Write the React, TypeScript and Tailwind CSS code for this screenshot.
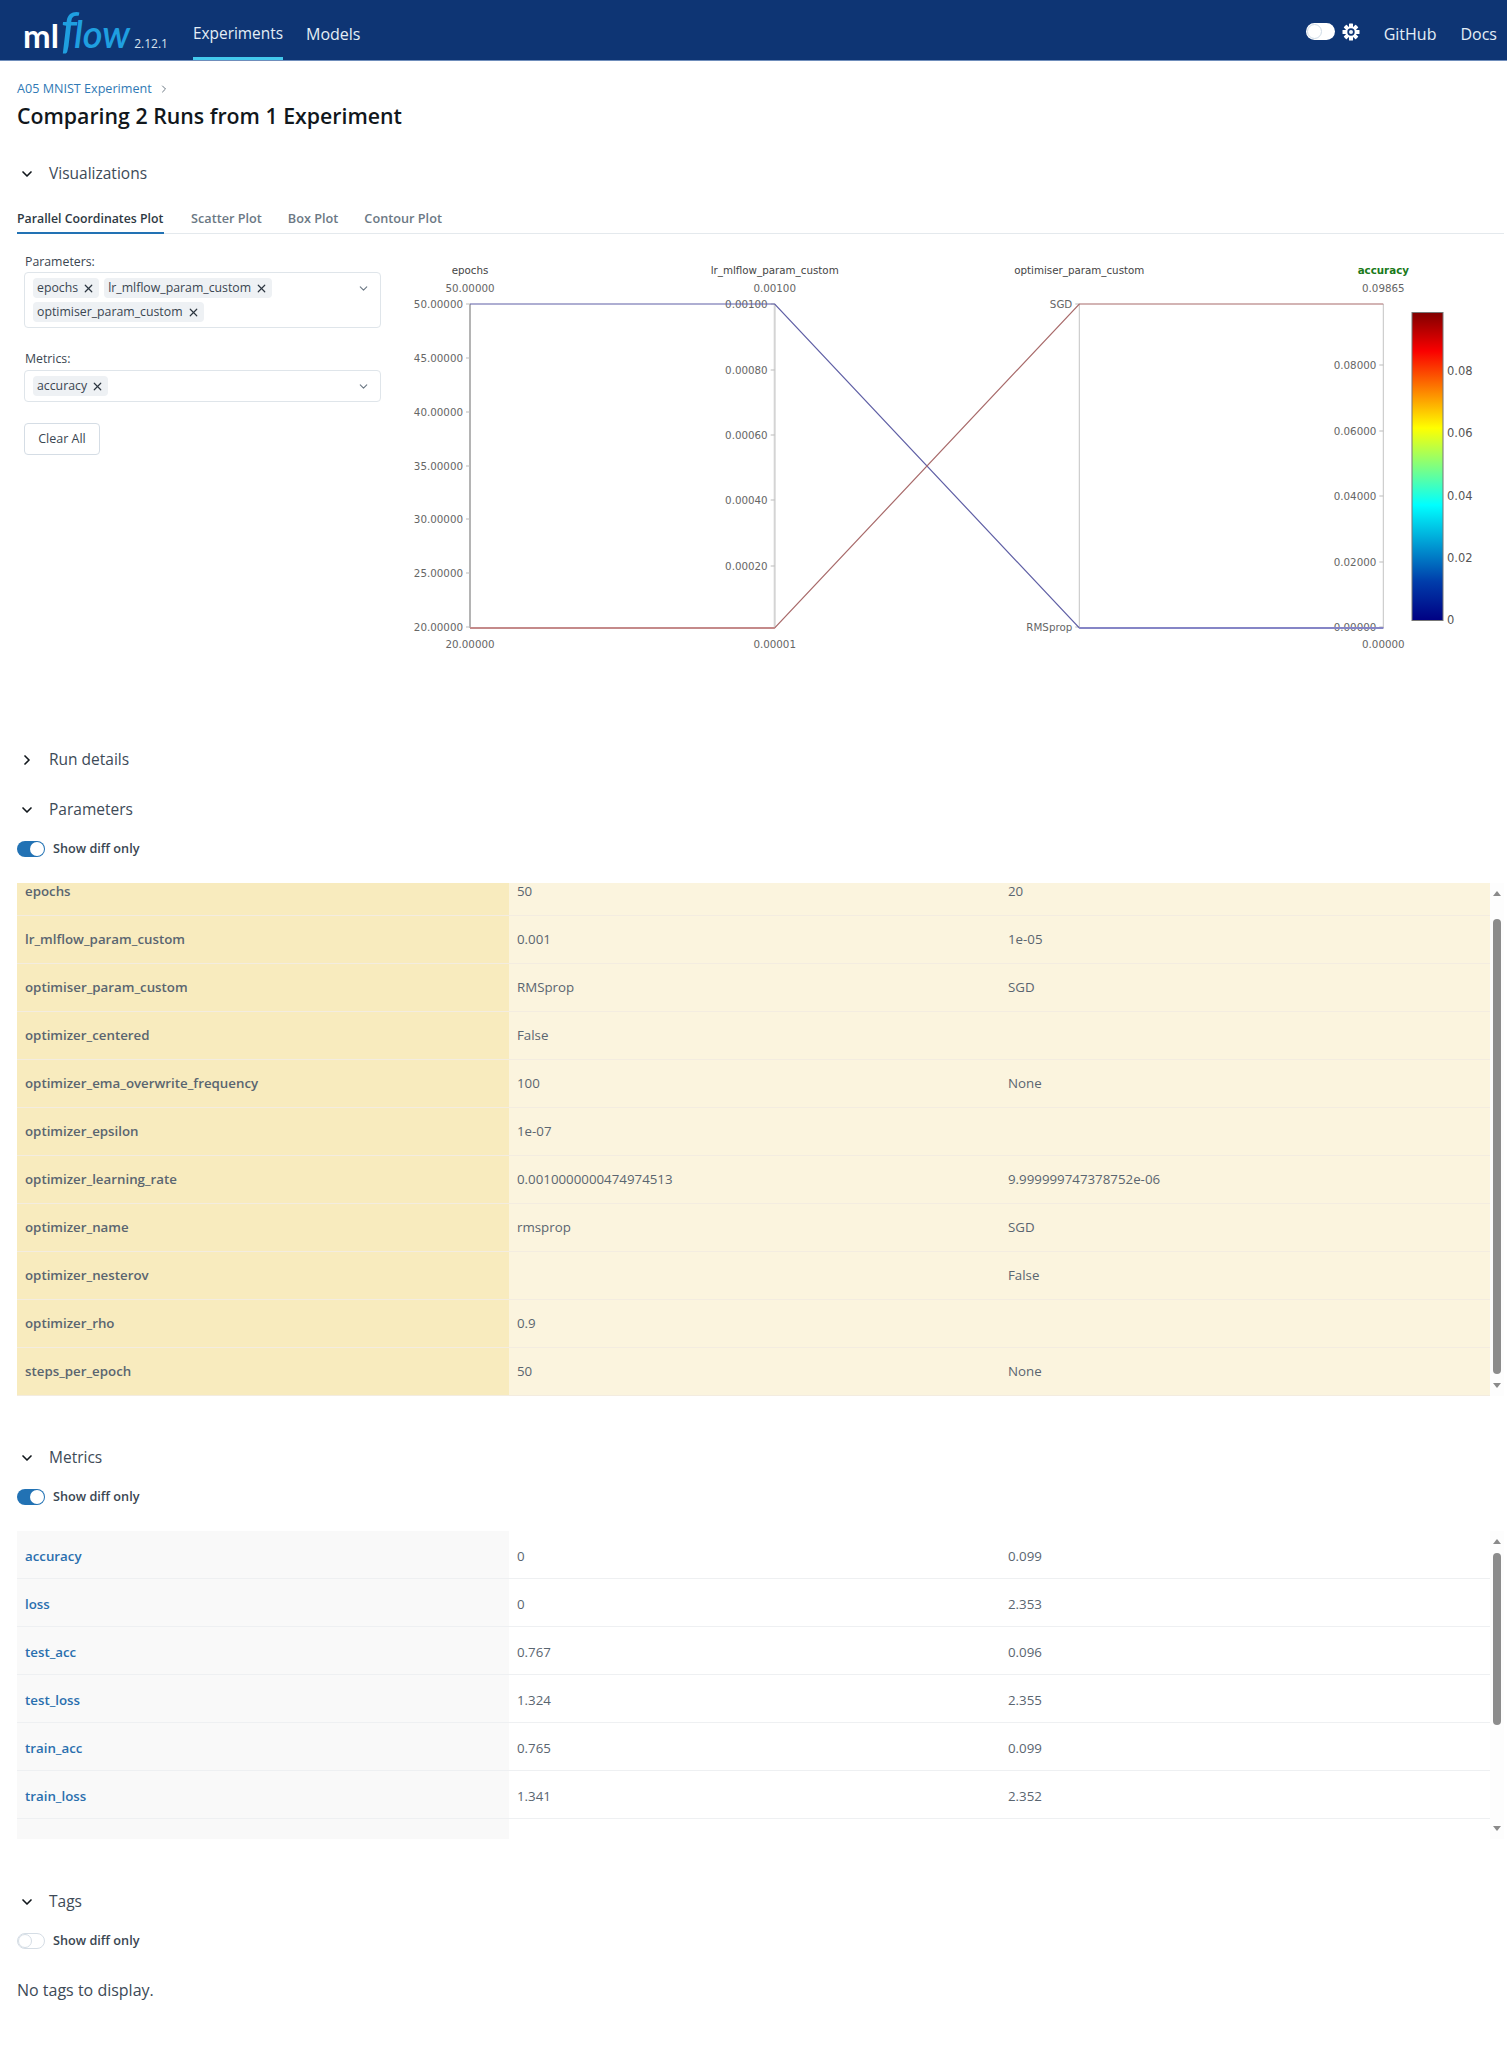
import { X, ChevronDown, ChevronRight } from "lucide-react";

const FONT = "font-['Open_Sans','Noto_Sans',sans-serif]";

const PARAMS: [string, string, string][] = [
  ["epochs", "50", "20"],
  ["lr_mlflow_param_custom", "0.001", "1e-05"],
  ["optimiser_param_custom", "RMSprop", "SGD"],
  ["optimizer_centered", "False", ""],
  ["optimizer_ema_overwrite_frequency", "100", "None"],
  ["optimizer_epsilon", "1e-07", ""],
  ["optimizer_learning_rate", "0.0010000000474974513", "9.999999747378752e-06"],
  ["optimizer_name", "rmsprop", "SGD"],
  ["optimizer_nesterov", "", "False"],
  ["optimizer_rho", "0.9", ""],
  ["steps_per_epoch", "50", "None"],
];

const METRICS: [string, string, string][] = [
  ["accuracy", "0", "0.099"],
  ["loss", "0", "2.353"],
  ["test_acc", "0.767", "0.096"],
  ["test_loss", "1.324", "2.355"],
  ["train_acc", "0.765", "0.099"],
  ["train_loss", "1.341", "2.352"],
];

const Section = ({ title, open = true }: { title: string; open?: boolean }) => (
  <div className="flex h-6 items-center text-[15.5px] text-[#3d4a57]">
    <span className="ml-[19px] flex w-[30px] text-[#11171c]">
      {open ? <ChevronDown size={16} strokeWidth={2.5} /> : <ChevronRight size={16} strokeWidth={2.5} />}
    </span>
    {title}
  </div>
);

const DiffToggle = ({ on = true }: { on?: boolean }) => (
  <div className="flex h-4 items-center gap-2 text-[12.7px] font-semibold text-[#3a4651]">
    <span
      className={
        on
          ? "flex h-4 w-7 items-center justify-end rounded-full bg-[#2272b4] p-px"
          : "flex h-4 w-7 items-center rounded-full border border-[#d5dde5] bg-white"
      }
    >
      <span className={on ? "h-3.5 w-3.5 rounded-full bg-white" : "h-3.5 w-3.5 rounded-full border border-[#d5dde5] bg-white"} />
    </span>
    Show diff only
  </div>
);

const Tag = ({ label }: { label: string }) => (
  <span className="flex h-5 items-center gap-1 rounded bg-[#eef1f4] px-1 text-[12.3px] leading-5 text-[#3a4651]">
    {label}
    <X size={13} strokeWidth={2.2} className="text-[#2c3640]" />
  </span>
);

const ScrollBar = ({ thumbTop, thumbHeight }: { thumbTop: string; thumbHeight: string }) => (
  <div className="relative w-[14px] shrink-0 bg-[#fdfdfd]">
    <span className="absolute left-[3px] top-[8px] h-0 w-0 border-x-4 border-b-[5px] border-x-transparent border-b-[#8a8a8a]" />
    <span className={`absolute left-[3px] w-2 rounded-full bg-[#8c8c8c] ${thumbTop} ${thumbHeight}`} />
    <span className="absolute bottom-[8px] left-[3px] h-0 w-0 border-x-4 border-t-[5px] border-x-transparent border-t-[#8a8a8a]" />
  </div>
);

const ParamsTable = () => (
  <div className="mr-[3px] ml-[17px] flex h-[513px]">
    <div className="min-w-0 flex-1 overflow-hidden bg-[#fbf4de]">
      <div className="-mt-[15px]">
        {PARAMS.map((r) => (
          <div key={r[0]} className="flex h-12 border-b border-[#f3ece0] pt-px text-[13.3px] text-[#5a6570]">
            <div className="-mt-px flex w-[492px] items-center bg-[#f8ebbe] pt-px pl-2 font-semibold">{r[0]}</div>
            <div className="flex w-[499px] items-center pl-2">{r[1]}</div>
            <div className="flex items-center">{r[2]}</div>
          </div>
        ))}
      </div>
    </div>
    <ScrollBar thumbTop="top-[36px]" thumbHeight="h-[455px]" />
  </div>
);

const MetricsTable = () => (
  <div className="mr-[3px] ml-[17px] flex h-[308px]">
    <div className="min-w-0 flex-1 overflow-hidden">
      {METRICS.map((r) => (
        <div key={r[0]} className="flex h-12 border-b border-[#eef0f2] text-[13.3px] text-[#5a6570]">
          <div className="flex w-[492px] items-center bg-[#f9f9f9] pt-1 pl-2 font-semibold text-[#2a6fae]">{r[0]}</div>
          <div className="flex w-[499px] items-center pt-1 pl-2">{r[1]}</div>
          <div className="flex items-center pt-1">{r[2]}</div>
        </div>
      ))}
      <div className="h-5 w-[492px] bg-[#f9f9f9]" />
    </div>
    <ScrollBar thumbTop="top-[22px]" thumbHeight="h-[172px]" />
  </div>
);

const EPOCH_TICKS: [string, number][] = [
  ["50.00000", 304], ["45.00000", 358], ["40.00000", 412], ["35.00000", 466],
  ["30.00000", 519], ["25.00000", 573], ["20.00000", 627],
];
const LR_TICKS: [string, number][] = [
  ["0.00100", 304], ["0.00080", 370], ["0.00060", 435], ["0.00040", 500], ["0.00020", 566],
];
const ACC_TICKS: [string, number][] = [
  ["0.08000", 365], ["0.06000", 431], ["0.04000", 496], ["0.02000", 562], ["0.00000", 627],
];
const OPT_TICKS: [string, number][] = [["SGD", 304], ["RMSprop", 627]];

const Axis = ({
  x, title, top, bottom, ticks, stroke, width = 1, titleClass = "fill-[#444]",
}: {
  x: number; title: string; top: string; bottom: string; ticks: [string, number][];
  stroke: string; width?: number; titleClass?: string;
}) => (
  <g>
    <line x1={x} x2={x} y1={304} y2={628} stroke={stroke} strokeWidth={width} />
    <text x={x} y={274} textAnchor="middle" className={titleClass}>{title}</text>
    <text x={x} y={292} textAnchor="middle" className="fill-[#666]">{top}</text>
    <text x={x} y={648} textAnchor="middle" className="fill-[#666]">{bottom}</text>
    {ticks.map(([t, y]) => (
      <g key={t}>
        <line x1={x - 4} x2={x} y1={y} y2={y} stroke="#bbb" />
        <text x={x - 7} y={y + 3.5} textAnchor="end" className="fill-[#666]">{t}</text>
      </g>
    ))}
  </g>
);

const ParallelPlot = () => (
  <svg
    viewBox="390 250 1117 420"
    width={1117}
    height={420}
    className="shrink-0 font-['DejaVu_Sans',sans-serif] text-[10.3px]"
  >
    <defs>
      <linearGradient id="jet" x1="0" y1="1" x2="0" y2="0">
        <stop offset="0" stopColor="#000083" />
        <stop offset="0.125" stopColor="#003caa" />
        <stop offset="0.375" stopColor="#00ffff" />
        <stop offset="0.625" stopColor="#ffff00" />
        <stop offset="0.875" stopColor="#fa0000" />
        <stop offset="1" stopColor="#800000" />
      </linearGradient>
    </defs>
    <Axis x={470} title="epochs" top="50.00000" bottom="20.00000" ticks={EPOCH_TICKS} stroke="#b4b4b4" width={2} />
    <Axis x={774.7} title="lr_mlflow_param_custom" top="0.00100" bottom="0.00001" ticks={LR_TICKS} stroke="#d4d4d4" width={2} />
    <Axis x={1079.3} title="optimiser_param_custom" top="" bottom="" ticks={OPT_TICKS} stroke="#c4c4c4" />
    <Axis x={1383.3} title="accuracy" top="0.09865" bottom="0.00000" ticks={ACC_TICKS} stroke="#c4c4c4" titleClass="fill-[#1a7a1a] font-bold" />
    <polyline points="470,304 774.7,304 1079.3,628 1383.3,628" fill="none" stroke="#5f5fa5" strokeWidth={1.2} />
    <polyline points="470,628 774.7,628 1079.3,304 1383.3,304" fill="none" stroke="#a86a6a" strokeWidth={1.2} />
    <line x1={470} x2={774.7} y1={628} y2={628} stroke="#c48a8a" strokeWidth={2} />
    <line x1={1079.3} x2={1383.3} y1={628} y2={628} stroke="#8585c6" strokeWidth={2} />
    <rect x={1412} y={312.5} width={31} height={308} fill="url(#jet)" stroke="#777" />
    {[["0.08", 371], ["0.06", 433], ["0.04", 496], ["0.02", 558], ["0", 620]].map(([t, y]) => (
      <text key={t} x={1447} y={Number(y) + 4} className="fill-[#555] text-[11.5px]">{t}</text>
    ))}
  </svg>
);

// 8 chunky teeth, dark ring, light centre
const Gear = () => (
  <svg width="18" height="18" viewBox="0 0 18 18" className="ml-[7px]">
    {[0, 45, 90, 135].map((a) => (
      <rect key={a} x="7" y="0.5" width="4" height="17" rx="0.6" fill="#fff" transform={`rotate(${a} 9 9)`} />
    ))}
    <circle cx="9" cy="9" r="5.6" fill="#fff" />
    <circle cx="9" cy="9" r="3.7" fill="#0e3574" />
    <circle cx="9" cy="9" r="2" fill="#eef3f8" />
  </svg>
);

const Header = () => (
  <header className="flex h-[61px] items-center border-b border-[#6f8dbb] bg-[#0e3574] pr-[10px] text-[16px] text-[#e4eef6]">
    <div className="-mt-[2px] ml-[23px] flex w-[146px] items-baseline font-['Lato',sans-serif]">
      <span className="text-[33px] leading-none font-bold text-white">ml</span>
      <span className="ml-[2px] text-[50px] leading-none font-medium text-[#1f9fe0] italic">f</span>
      <span className="-ml-[3px] text-[38px] leading-none font-semibold text-[#1f9fe0] italic">low</span>
      <span className="ml-[4px] font-['Open_Sans',sans-serif] text-[12px] text-[#d8e4ee]">2.12.1</span>
    </div>
    <a className="relative ml-[24px] flex h-full items-center pt-2 text-[15.4px]">
      Experiments
      <span className="absolute inset-x-0 bottom-0 h-[3px] bg-[#43c9ed]" />
    </a>
    <a className="ml-[23px] pt-2">Models</a>
    <div className="ml-auto flex items-center pt-[3px]">
      <span className="flex h-[17px] w-[29px] items-center rounded-full bg-white pl-px">
        <span className="h-[15px] w-[15px] rounded-full border border-[#cfdbe6] bg-white" />
      </span>
      <Gear />
      <a className="ml-[24px] pt-[5px]">GitHub</a>
      <a className="ml-[24px] pt-[5px]">Docs</a>
    </div>
  </header>
);

const Select = ({ className, children }: { className: string; children: React.ReactNode }) => (
  <div className={`relative ml-6 w-[357px] rounded border border-[#dfe5ea] px-2 py-[5px] ${className}`}>
    <div className="flex flex-wrap gap-x-[5px] gap-y-1">{children}</div>
    <ChevronDown size={13} strokeWidth={2} className="absolute top-[9px] right-[10px] text-[#6b7884]" />
  </div>
);

export default function App() {
  return (
    <div className={`h-[2049px] w-[1507px] overflow-hidden bg-white ${FONT}`}>
      <Header />
      <div className="mt-[18px] ml-[17px] flex h-5 items-center gap-[6px] text-[12.6px] text-[#2f79b5]">
        A05 MNIST Experiment
        <ChevronRight size={12} className="text-[#6b7884]" />
      </div>
      <h1 className="mt-[3px] ml-[17px] text-[21.3px] leading-7 font-semibold text-[#11171c]">Comparing 2 Runs from 1 Experiment</h1>
      <div className="mt-[32px]"><Section title="Visualizations" /></div>

      <div className="mt-[23px] mr-[3px] ml-[17px] flex h-[25px] gap-[26px] border-b border-[#e4e9ed] text-[12.7px] font-semibold whitespace-nowrap text-[#6b7884]">
        <span className="relative mr-px w-[147px] text-[12.3px] leading-[19px] text-[#2d3842]">
          Parallel Coordinates Plot
          <span className="absolute inset-x-0 -bottom-px h-[2px] bg-[#2272b4]" />
        </span>
        <span>Scatter Plot</span>
        <span>Box Plot</span>
        <span>Contour Plot</span>
      </div>

      <div className="flex h-[468px]">
        <div className="w-[390px] shrink-0">
          <div className="mt-[18px] ml-[25px] h-5 text-[12.3px] leading-5 text-[#3a4651]">Parameters:</div>
          <Select className="h-[56px]">
            <Tag label="epochs" />
            <Tag label="lr_mlflow_param_custom" />
            <Tag label="optimiser_param_custom" />
          </Select>
          <div className="mt-[21px] ml-[25px] h-5 text-[12.3px] leading-5 text-[#3a4651]">Metrics:</div>
          <Select className="mt-[1px] h-[32px]">
            <Tag label="accuracy" />
          </Select>
          <button
            type="button"
            className="mt-[21px] ml-6 h-8 w-[76px] rounded border border-[#d5dde5] pt-px text-[12.5px] text-[#3a4651]"
          >
            Clear All
          </button>
        </div>
        <div className="mt-[16px]"><ParallelPlot /></div>
      </div>

      <div className="mt-[46px]"><Section title="Run details" open={false} /></div>
      <div className="mt-[26px]"><Section title="Parameters" /></div>
      <div className="mt-[19px] ml-[17px]"><DiffToggle /></div>
      <div className="mt-[26px]"><ParamsTable /></div>

      <div className="mt-[50px]"><Section title="Metrics" /></div>
      <div className="mt-[19px] ml-[17px]"><DiffToggle /></div>
      <div className="mt-[26px]"><MetricsTable /></div>

      <div className="mt-[51px]"><Section title="Tags" /></div>
      <div className="mt-[19px] ml-[17px]"><DiffToggle on={false} /></div>
      <div className="mt-[29px] ml-[17px] text-[16px] leading-6 text-[#3d4a57]">No tags to display.</div>
    </div>
  );
}
